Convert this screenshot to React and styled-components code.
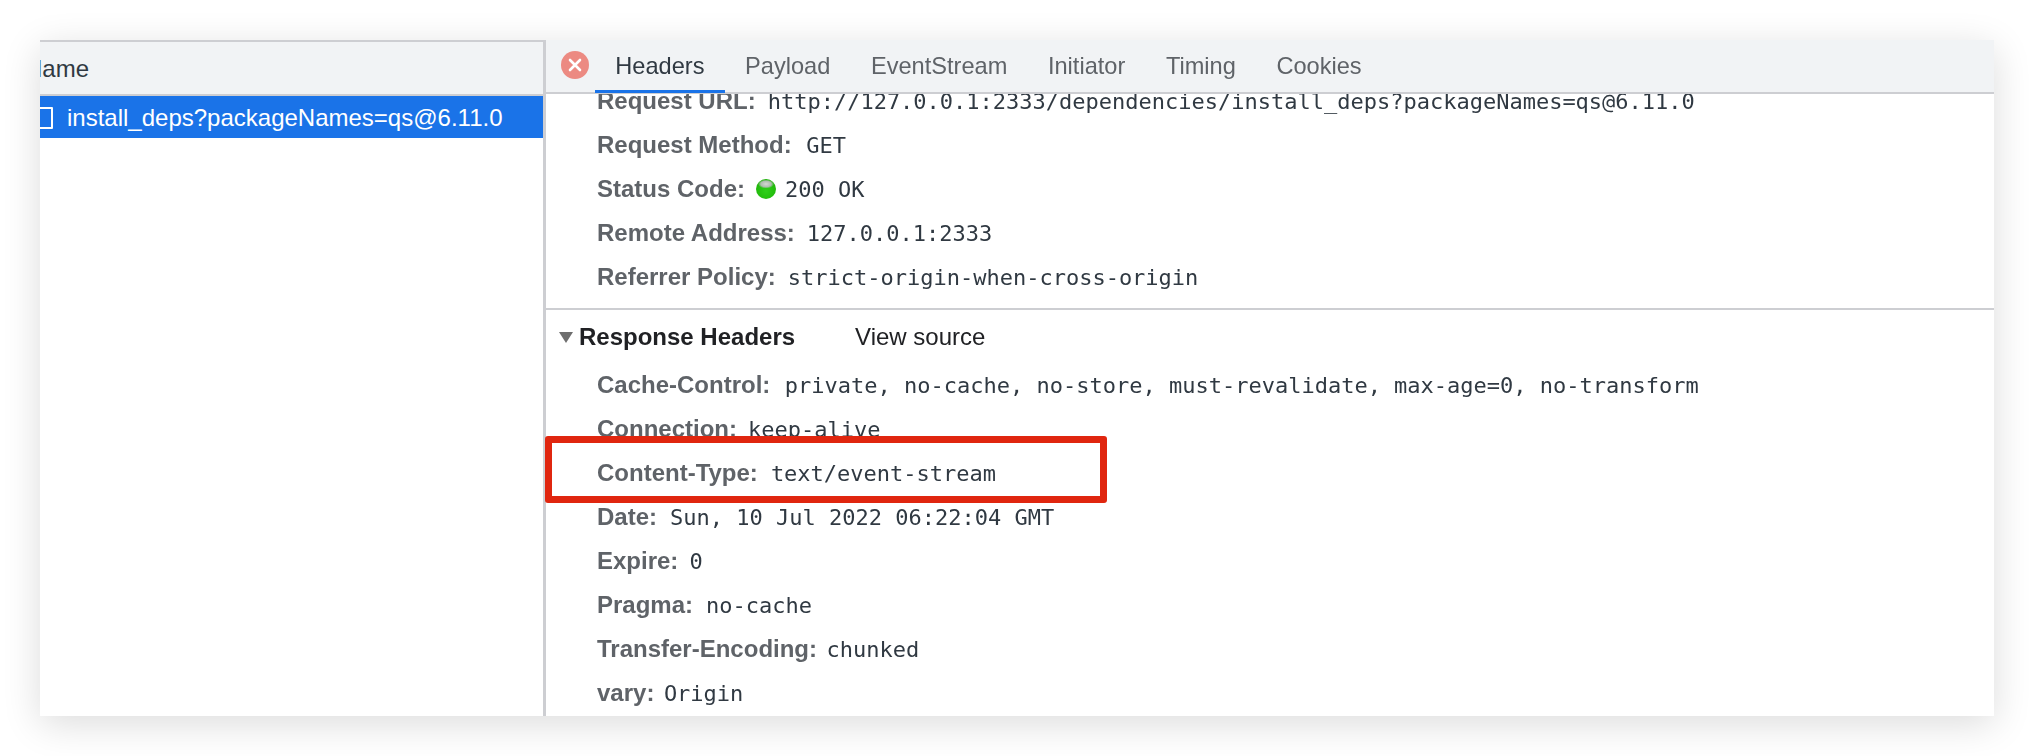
import React from "react";
import styled, { createGlobalStyle } from "styled-components";

const Global = createGlobalStyle`
  html, body { margin: 0; padding: 0; background: #fff; }
  body { width: 2034px; height: 756px; overflow: hidden; font-family: "Liberation Sans", Arial, sans-serif; }
`;

const Page = styled.div`
  width: 2034px;
  height: 756px;
  padding: 40px;
  box-sizing: border-box;
`;

const Window = styled.div`
  position: relative;
  width: 1954px;
  height: 676px;
  display: grid;
  grid-template-columns: 506px 1fr;
  background: #fff;
  box-shadow: 0 8px 36px rgba(0, 0, 0, 0.14);
  filter: blur(0.35px);
`;

const ListPane = styled.section`
  display: flex;
  flex-direction: column;
  overflow: hidden;
  border-right: 3px solid #cdced2;
`;

const ListHeader = styled.div`
  height: 52px;
  flex: none;
  display: flex;
  align-items: center;
  background: #f1f3f5;
  border-top: 2px solid #cdced2;
  border-bottom: 2px solid #cdced2;
  font-size: 24px;
  color: #303942;
`;

const ClippedName = styled.span`
  margin-left: -15px;
  padding-top: 1px;
  white-space: nowrap;
`;

const RequestRow = styled.div`
  height: 42px;
  flex: none;
  box-sizing: border-box;
  padding-top: 1px;
  display: flex;
  align-items: center;
  gap: 14px;
  background: #1a73e8;
  color: #fff;
  font-size: 24px;
  white-space: nowrap;
`;

const FileIcon = styled.span`
  flex: none;
  width: 20px;
  height: 22px;
  margin-left: -7px;
  box-sizing: border-box;
  border: 2px solid #fff;
  border-radius: 1px;
`;

const DetailPane = styled.section`
  display: flex;
  flex-direction: column;
  min-width: 0;
  overflow: hidden;
`;

const TabBar = styled.nav`
  position: relative;
  z-index: 1;
  height: 54px;
  flex: none;
  box-sizing: border-box;
  display: flex;
  align-items: stretch;
  padding-left: 15px;
  background: #f1f3f5;
  border-bottom: 2px solid #cdced2;
`;

const CloseButton = styled.svg`
  flex: none;
  width: 28px;
  height: 28px;
  align-self: center;
  margin: 0 6px 2px 0;
`;

const Tab = styled.div`
  display: flex;
  align-items: center;
  height: 53px;
  padding: 2px 20.3px 0;
  font-size: 23.6px;
  white-space: nowrap;
  color: ${(p) => (p.$active ? "#303942" : "#5f6368")};
  box-sizing: border-box;
  border-bottom: 3px solid ${(p) => (p.$active ? "#1a73e8" : "transparent")};
  margin-bottom: -1px;
`;

const Scroller = styled.div`
  flex: 1;
  overflow: hidden;
  margin-top: -15px;
`;

const Section = styled.div`
  border-bottom: ${(p) => (p.$last ? "none" : "2px solid #cdced2")};
  padding-bottom: ${(p) => (p.$last ? "0" : "9px")};
`;

const SectionTitle = styled.div`
  display: flex;
  align-items: center;
  height: 44px;
  margin-top: 5px;
  margin-bottom: 4px;
  padding-left: 13px;
  color: #202124;
`;

const Triangle = styled.span`
  flex: none;
  width: 0;
  height: 0;
  border-left: 7.5px solid transparent;
  border-right: 7.5px solid transparent;
  border-top: 11px solid #6e6e6e;
  margin-right: 6px;
`;

const TitleText = styled.span`
  font-weight: 700;
  font-size: 24px;
`;

const ViewSource = styled.span`
  margin-left: 60px;
  font-size: 24px;
`;

const Row = styled.div`
  height: 44px;
  display: flex;
  align-items: center;
  padding-left: 51px;
  white-space: nowrap;
`;

const Label = styled.span`
  font-weight: 700;
  font-size: 24px;
  color: #5f6368;
  margin-right: ${(p) => p.$gap}px;
`;

const Value = styled.span`
  font-family: "DejaVu Sans Mono", "Liberation Mono", monospace;
  font-size: 22px;
  color: #303942;
`;

const StatusDot = styled.span`
  flex: none;
  width: 20px;
  height: 20px;
  margin: 0 9px 0 -1px;
  border-radius: 50%;
  background:
    radial-gradient(ellipse 8px 4.5px at 50% 25%, #d3d8d3 0%, #aebcae 65%, transparent 100%),
    radial-gradient(circle at 50% 60%, #2fd01a 0%, #22bb0c 60%, #1c9f0a 100%);
`;

const Highlight = styled.div`
  position: absolute;
  left: 505px;
  top: 396px;
  width: 562px;
  height: 67px;
  box-sizing: border-box;
  border: 7px solid #e0260f;
  border-radius: 3px;
  z-index: 2;
`;

const general = [
  ["Request URL:", "http://127.0.0.1:2333/dependencies/install_deps?packageNames=qs@6.11.0", 12],
  ["Request Method:", "GET", 14.5],
  ["Status Code:", "200 OK", 12, true],
  ["Remote Address:", "127.0.0.1:2333", 12],
  ["Referrer Policy:", "strict-origin-when-cross-origin", 12],
];

const response = [
  ["Cache-Control:", "private, no-cache, no-store, must-revalidate, max-age=0, no-transform", 14.5],
  ["Connection:", "keep-alive", 11],
  ["Content-Type:", "text/event-stream", 13],
  ["Date:", "Sun, 10 Jul 2022 06:22:04 GMT", 13],
  ["Expire:", "0", 11],
  ["Pragma:", "no-cache", 13],
  ["Transfer-Encoding:", "chunked", 9.5],
  ["vary:", "Origin", 9.5],
];

const tabs = ["Headers", "Payload", "EventStream", "Initiator", "Timing", "Cookies"];

function HeaderRow({ name, value, gap, status }) {
  return (
    <Row>
      <Label $gap={gap}>{name}</Label>
      {status && <StatusDot />}
      <Value>{value}</Value>
    </Row>
  );
}

export default function App() {
  return (
    <Page>
      <Global />
      <Window>
        <ListPane>
          <ListHeader>
            <ClippedName>Name</ClippedName>
          </ListHeader>
          <RequestRow>
            <FileIcon />
            <span>install_deps?packageNames=qs@6.11.0</span>
          </RequestRow>
        </ListPane>
        <DetailPane>
          <TabBar>
            <CloseButton viewBox="0 0 28 28">
              <circle cx="14" cy="14" r="14" fill="#ec8a82" />
              <path d="M9 9l10 10M19 9L9 19" stroke="#fff" strokeWidth="2.6" strokeLinecap="round" />
            </CloseButton>
            {tabs.map((t, i) => (
              <Tab key={t} $active={i === 0}>{t}</Tab>
            ))}
          </TabBar>
          <Scroller>
            <Section>
              {general.map(([n, v, g, s]) => (
                <HeaderRow key={n} name={n} value={v} gap={g} status={s} />
              ))}
            </Section>
            <Section $last>
              <SectionTitle>
                <Triangle />
                <TitleText>Response Headers</TitleText>
                <ViewSource>View source</ViewSource>
              </SectionTitle>
              {response.map(([n, v, g]) => (
                <HeaderRow key={n} name={n} value={v} gap={g} />
              ))}
            </Section>
          </Scroller>
        </DetailPane>
        <Highlight />
      </Window>
    </Page>
  );
}
